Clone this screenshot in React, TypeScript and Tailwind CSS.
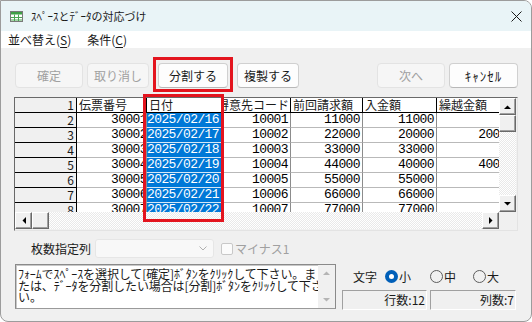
import React from "react";

const header = ["1", "伝票番号", "日付", "得意先コード", "前回請求額", "入金額", "繰越金額"];
const widths = [62, 70, 76, 68, 72, 74, 70];
const rows = [
  ["2", "30001", "2025/02/16", "10001", "11000", "11000", ""],
  ["3", "30002", "2025/02/17", "10002", "22000", "20000", "2000"],
  ["4", "30003", "2025/02/18", "10003", "33000", "33000", ""],
  ["5", "30004", "2025/02/19", "10004", "44000", "40000", "4000"],
  ["6", "30005", "2025/02/20", "10005", "55000", "55000", ""],
  ["7", "30006", "2025/02/21", "10006", "66000", "66000", ""],
  ["8", "30007", "2025/02/22", "10007", "77000", "77000", ""],
];

function Btn({ label, w, disabled, wide }: { label: string; w: number; disabled?: boolean; wide?: boolean }) {
  return (
    <div
      style={{ width: w }}
      className={
        (disabled
          ? "h-[25px] shrink-0 rounded-[4px] border border-[#e3e3e3] bg-[#f6f6f6] text-[#a0a0a0] flex items-center justify-center"
          : "h-[25px] shrink-0 rounded-[4px] border border-[#d0d0d0] border-b-[#b8b8b8] bg-[#fdfdfd] text-[#1a1a1a] flex items-center justify-center") +
        (wide ? " text-[13px] tracking-[1px]" : " text-[12px]")
      }
    >
      {label}
    </div>
  );
}

function Arrow({ dir, color = "#000" }: { dir: "up" | "down" | "left" | "right"; color?: string }) {
  const pts = {
    up: "0,4 7,4 3.5,0.5",
    down: "0,0 7,0 3.5,3.5",
    left: "4,0 4,7 0.5,3.5",
    right: "0,0 0,7 3.5,3.5",
  }[dir];
  const horiz = dir === "left" || dir === "right";
  return (
    <svg width={horiz ? 4 : 7} height={horiz ? 7 : 4} viewBox={horiz ? "0 0 4 7" : "0 0 7 4"}>
      <polygon points={pts} fill={color} />
    </svg>
  );
}

function SBtn({ dir }: { dir?: "up" | "down" | "left" | "right" }) {
  return (
    <div className="w-[17px] h-[17px] shrink-0 bg-[#f0f0f0] border border-t-white border-l-white border-r-[#696969] border-b-[#696969] shadow-[inset_-1px_-1px_0_#a0a0a0] flex items-center justify-center">
      {dir && <Arrow dir={dir} />}
    </div>
  );
}

const track =
  "bg-[repeating-conic-gradient(#ffffff_0_25%,#e9e9e9_0_50%)] bg-[length:2px_2px]";

function Grid() {
  return (
    <div className="mt-[9px] w-[504px] h-[134px] border border-t-[#696969] border-l-[#696969] border-r-[#e3e3e3] border-b-[#e3e3e3] bg-[#f0f0f0] flex flex-col">
      <div className="flex h-[114px]">
        <div className="w-[484px] h-[114px] overflow-hidden bg-white font-['Liberation_Mono','Noto_Sans_CJK_JP',monospace] text-[13px] tracking-[-0.6px]">
          <div className="flex h-[15px]">
            {header.map((h, i) => (
              <div
                key={i}
                style={{ width: widths[i] }}
                className={
                  "shrink-0 h-[15px] border-b border-r border-black overflow-hidden flex items-center whitespace-nowrap font-['Noto_Sans_CJK_JP',sans-serif] text-[12px] tracking-normal leading-[14px] " +
                  (i === 0
                    ? "bg-[#f0f0f0] justify-end pr-[2px]"
                    : i === 3
                      ? "bg-white justify-end pr-[1px]"
                      : "bg-white pl-[2px]")
                }
              >
                {h}
              </div>
            ))}
          </div>
          {rows.map((r, ri) => (
            <div key={ri} className="flex h-[15px]">
              {r.map((v, i) => (
                <div
                  key={i}
                  style={{ width: widths[i] }}
                  className={
                    "shrink-0 h-[15px] overflow-hidden flex items-center justify-end whitespace-nowrap leading-[14px] " +
                    (i === 0
                      ? "bg-[#f0f0f0] border-b border-r border-black pr-[2px] font-['Noto_Sans_CJK_JP',sans-serif] text-[12px] tracking-normal"
                      : i === 2
                        ? "bg-[#0078d7] text-white border-b border-r border-b-[#d6e6f5] border-r-[#8c8c8c] pr-[3px]"
                        : "bg-white text-black border-b border-r border-b-[#b9b9b9] border-r-[#8c8c8c] pr-[2px]")
                  }
                >
                  <span className={i === 1 ? "translate-x-[3px]" : i === 6 ? "translate-x-[3px]" : ""}>{v}</span>
                </div>
              ))}
            </div>
          ))}
        </div>
        <div className={"w-[17px] h-[114px] flex flex-col " + track}>
          <SBtn dir="up" />
          <SBtn />
          <div className="flex-1" />
          <SBtn dir="down" />
        </div>
      </div>
      <div className="flex h-[17px]">
        <div className={"w-[484px] flex " + track}>
          <SBtn dir="left" />
          <SBtn />
          <div className="flex-1" />
          <SBtn dir="right" />
        </div>
        <div className="w-[18px] bg-[#f0f0f0]" />
      </div>
    </div>
  );
}

function Radio({ label, on }: { label: string; on?: boolean }) {
  return (
    <div className="flex items-center gap-[1px]">
      {on ? (
        <div className="w-[13px] h-[13px] rounded-full bg-[#005fb8] flex items-center justify-center">
          <div className="w-[5px] h-[5px] rounded-full bg-white" />
        </div>
      ) : (
        <div className="w-[13px] h-[13px] rounded-full border border-[#5d5d5d]" />
      )}
      <span className="text-[12px] leading-[14px]">{label}</span>
    </div>
  );
}

export default function App() {
  return (
    <div className="relative w-[532px] h-[322px] overflow-hidden bg-white font-['Noto_Sans_CJK_JP',sans-serif] text-[#1a1a1a]">
      <div className="w-[532px] h-[322px] border border-[#9c9c9c] rounded-tr-[8px] rounded-b-[8px] overflow-hidden flex flex-col bg-[#f0f0f0]">
        <div className="h-[30px] shrink-0 bg-[#e9f4f7] flex items-center pl-[9px] pr-[9px]">
          <svg width="13" height="11" viewBox="0 0 13 11">
            <rect x="0.5" y="0.5" width="12" height="10" fill="#fff" stroke="#7a7a7a" />
            <rect x="1" y="1" width="11" height="2.5" fill="#3f9f47" />
            <path d="M1 6.5H12M1 9H12M4.5 3.5V10M8.5 3.5V10" stroke="#4aa552" strokeWidth="1" />
          </svg>
          <span className="ml-[8px] text-[11px] leading-[14px]">ｽﾍﾟｰｽとﾃﾞｰﾀの対応づけ</span>
          <div className="flex-1" />
          <svg width="11" height="11" viewBox="0 0 11 11">
            <path d="M0.5 0.5L10.5 10.5M10.5 0.5L0.5 10.5" stroke="#1a1a1a" strokeWidth="1" />
          </svg>
        </div>
        <div className="h-[17px] shrink-0 bg-white flex items-center text-[12px] leading-[14px]">
          <span className="ml-[7px]">
            並べ替え(<span className="underline underline-offset-2">S</span>)
          </span>
          <span className="ml-[16px]">
            条件(<span className="underline underline-offset-2">C</span>)
          </span>
        </div>
        <div className="flex-1 px-[13px] flex flex-col">
          <div className="mt-[15px] flex pl-[1px]">
            <Btn label="確定" w={68} disabled />
            <div className="w-[4px]" />
            <Btn label="取り消し" w={62} disabled />
            <div className="w-[9px]" />
            <Btn label="分割する" w={70} />
            <div className="w-[9px]" />
            <Btn label="複製する" w={62} />
            <div className="flex-1" />
            <Btn label="次へ" w={68} disabled />
            <div className="w-[4px]" />
            <Btn label="ｷｬﾝｾﾙ" w={69} wide />
          </div>
          <Grid />
          <div className="mt-[8px] h-[19px] flex items-center pl-[17px]">
            <span className="text-[12px] leading-[14px] w-[64px]">枚数指定列</span>
            <div className="w-[119px] h-[19px] rounded-[3px] border border-[#e6e6e6] bg-[#f8f8f8] flex items-center justify-end pr-[6px]">
              <svg width="8" height="5" viewBox="0 0 8 5">
                <path d="M0.5 0.5L4 4L7.5 0.5" fill="none" stroke="#b0b0b0" strokeWidth="1" />
              </svg>
            </div>
            <div className="ml-[7px] w-[12px] h-[12px] rounded-[2px] border border-[#c8c8c8] bg-[#fbfbfb]" />
            <span className="ml-[2px] text-[12px] leading-[14px] text-[#a0a0a0]">マイナス1</span>
          </div>
          <div className="mt-[6px] flex">
            <div className="ml-[1px] w-[321px] h-[45px] border border-[#8a8a8a] border-b-[#9a9a9a] bg-white flex shadow-[inset_1px_1px_0_#c8c8c8]">
              <div className="flex-1 pl-[2px] pt-[3px] text-[12px] leading-[11.5px] tracking-[-0.1px] whitespace-nowrap overflow-hidden">
                <div>ﾌｫｰﾑでｽﾍﾟｰｽを選択して[確定]ﾎﾞﾀﾝをｸﾘｯｸして下さい。ま</div>
                <div>たは、ﾃﾞｰﾀを分割したい場合は[分割]ﾎﾞﾀﾝをｸﾘｯｸして下さ</div>
                <div>い。</div>
              </div>
              <div className="w-[17px] h-full bg-[#f0f0f0] flex flex-col items-center justify-between py-[6px]">
                <Arrow dir="up" color="#b4b4b4" />
                <Arrow dir="down" color="#b4b4b4" />
              </div>
            </div>
            <div className="ml-[6px] w-[174px] flex flex-col">
              <div className="mt-[5px] h-[15px] flex items-center">
                <span className="ml-[11px] text-[12px] leading-[14px]">文字</span>
                <div className="ml-[8px]">
                  <Radio label="小" on />
                </div>
                <div className="ml-[19px]">
                  <Radio label="中" />
                </div>
                <div className="ml-[17px]">
                  <Radio label="大" />
                </div>
              </div>
              <div className="mt-[6px] flex gap-[3px]">
                <div className="w-[85px] h-[20px] border border-t-[#a0a0a0] border-l-[#a0a0a0] border-r-white border-b-white flex items-center justify-end pr-[1px] text-[12px] leading-[14px]">
                  行数:12
                </div>
                <div className="w-[86px] h-[20px] border border-t-[#a0a0a0] border-l-[#a0a0a0] border-r-white border-b-white flex items-center justify-end pr-[1px] text-[12px] leading-[14px]">
                  列数:7
                </div>
              </div>
            </div>
          </div>
        </div>
      </div>
      <div className="absolute left-[153px] top-[57px] w-[80px] h-[35px] border-[3px] border-[#e3141e]" />
      <div className="absolute left-[143px] top-[94px] w-[81px] h-[128px] border-[3px] border-[#e3141e]" />
    </div>
  );
}
